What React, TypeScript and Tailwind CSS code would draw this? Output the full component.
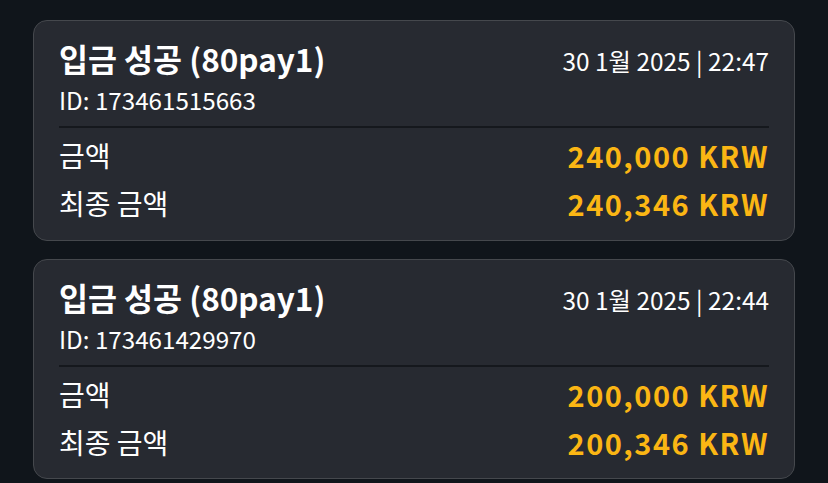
const items = [
  { id: "173461515663", date: "30 1월 2025 | 22:47", amount: "240,000 KRW", total: "240,346 KRW" },
  { id: "173461429970", date: "30 1월 2025 | 22:44", amount: "200,000 KRW", total: "200,346 KRW" },
];

export default function App() {
  return (
    <div
      className="min-h-screen bg-[#10151b] px-[33px] pt-[20px] text-white"
      style={{ fontFamily: '"Noto Sans CJK KR", "Noto Sans", sans-serif' }}
    >
      <div className="flex flex-col gap-[18px]">
        {items.map((it) => (
          <div
            key={it.id}
            className="rounded-[14px] border-[1.5px] border-[#45484d] bg-[#272a31] px-[25px] pt-[17px] pb-[12.5px]"
          >
            <div className="flex items-start justify-between">
              <div>
                <div className="text-[31.5px] font-bold leading-[40px]">입금 성공 (80pay1)</div>
                <div className="mt-[6px] text-[24.2px] leading-[32px]">ID: {it.id}</div>
              </div>
              <div className="pt-[3px] text-[24.4px] leading-[40px]">{it.date}</div>
            </div>
            <div className="mt-[10px] h-[2px] bg-[#15181d]" />
            <div className="mt-[3px] flex items-center justify-between leading-[48px]">
              <span className="text-[28px]">금액</span>
              <span className="text-[29px] font-bold tracking-[1.5px] text-[#fbb614]">{it.amount}</span>
            </div>
            <div className="flex items-center justify-between leading-[48px]">
              <span className="text-[28px]">최종 금액</span>
              <span className="text-[29px] font-bold tracking-[1.5px] text-[#fbb614]">{it.total}</span>
            </div>
          </div>
        ))}
      </div>
    </div>
  );
}
